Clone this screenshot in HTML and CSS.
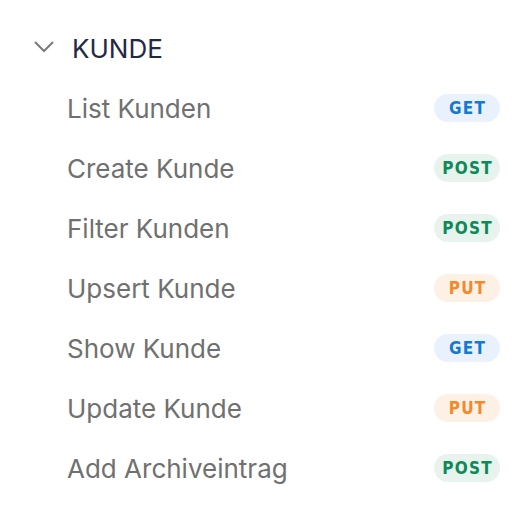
FILE: index.html
```html
<!DOCTYPE html>
<html lang="de">

<head>
    <meta charset="UTF-8">
    <meta name="viewport" content="width=device-width, initial-scale=1.0">
    <title>Kunde</title>
    <link rel="stylesheet" href="styles.css">
</head>

<body>
    <nav class="sidebar">
        <div class="group-title">
            <svg class="chevron" width="20" height="12" viewBox="0 0 20 12">
                <path d="M1 1 L10 10 L19 1" fill="none" stroke="#7a7a7a" stroke-width="2" />
            </svg>
            <span>KUNDE</span>
        </div>
        <ul class="endpoints">
            <li><span class="name">List Kunden</span><span class="method get">GET</span></li>
            <li><span class="name">Create Kunde</span><span class="method post">POST</span></li>
            <li><span class="name">Filter Kunden</span><span class="method post">POST</span></li>
            <li><span class="name">Upsert Kunde</span><span class="method put">PUT</span></li>
            <li><span class="name">Show Kunde</span><span class="method get">GET</span></li>
            <li><span class="name">Update Kunde</span><span class="method put">PUT</span></li>
            <li><span class="name">Add Archiveintrag</span><span class="method post">POST</span></li>
        </ul>
    </nav>
</body>

</html>
```
FILE: styles.css
```css
body {
    margin: 0;
    background-color: #fff;
    font-family: Inter, "Noto Sans", sans-serif;
}

.sidebar {
    padding: 18px 26px 0 34px;
}

.group-title {
    display: flex;
    align-items: center;
    height: 60px;
    color: #232844;
    font-size: 26px;
}

.chevron {
    margin-right: 18px;
    margin-top: -2px;
}

.endpoints {
    list-style: none;
    margin: 0;
    padding: 0;
}

.endpoints li {
    display: flex;
    align-items: center;
    justify-content: space-between;
    height: 60px;
    padding-left: 33px;
}

.name {
    color: #707070;
    font-size: 26px;
}

.method {
    width: 66px;
    height: 28px;
    line-height: 28px;
    border-radius: 14px;
    text-align: center;
    font-family: "DejaVu Sans Condensed", "DejaVu Sans", sans-serif;
    font-stretch: condensed;
    font-weight: bold;
    font-size: 17px;
    letter-spacing: 1.2px;
    text-indent: 1.2px;
}

.get {
    background-color: #e8f1fc;
    color: #1279d6;
}

.post {
    background-color: #e8f3ee;
    color: #0c8a57;
}

.put {
    background-color: #fdf1e6;
    color: #f5882a;
}
```
